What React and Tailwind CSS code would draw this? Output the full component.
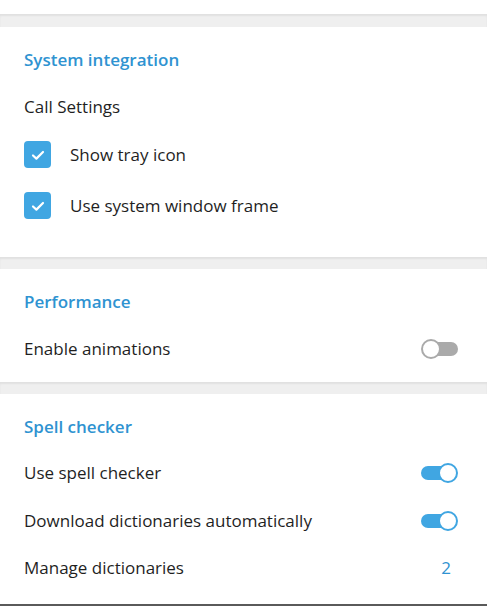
import React from "react";

function Band({ className = "" }) {
  return (
    <div
      className={`bg-[#efefef] shadow-[inset_0_2px_2px_rgba(0,0,0,0.06)] ${className}`}
    />
  );
}

function Checkbox() {
  return (
    <div className="w-[27px] h-[27px] rounded-[4px] bg-[#40a6e2] flex items-center justify-center shrink-0">
      <svg width="18" height="18" viewBox="0 0 18 18" fill="none">
        <path
          d="M4 9.5 L7.4 12.6 L14 6"
          stroke="white"
          strokeWidth="2.2"
          strokeLinecap="round"
          strokeLinejoin="round"
        />
      </svg>
    </div>
  );
}

function Toggle({ on }) {
  return (
    <div className="relative w-[37px] h-5 shrink-0">
      <div
        className={`absolute top-[3px] bottom-[3px] rounded-full ${
          on ? "left-0 right-2 bg-[#40a6e2]" : "left-2 right-0 bg-[#aaaaaa]"
        }`}
      />
      <div
        className={`absolute top-0 w-5 h-5 rounded-full bg-white border-2 ${
          on ? "right-0 border-[#40a6e2]" : "left-0 border-[#aaaaaa]"
        }`}
      />
    </div>
  );
}

function Title({ children }) {
  return (
    <div className="pt-[21px] h-[45px] leading-6 text-[17px] font-semibold text-[#2f93d1]">
      {children}
    </div>
  );
}

function Row({ label, className = "", children }) {
  return (
    <div className={`h-6 flex items-center justify-between ${className}`}>
      <span>{label}</span>
      {children}
    </div>
  );
}

export default function App() {
  return (
    <div className="w-[487px] h-[606px] bg-[#efefef] flex flex-col overflow-hidden font-['Open_Sans',sans-serif] text-[17px] text-[#1f1f1f]">
      <div className="h-[14px] bg-white shrink-0" />
      <Band className="h-[13px] shrink-0" />

      <section className="h-[230px] bg-white pl-6 pr-[29px] shrink-0">
        <Title>System integration</Title>
        <div className="mt-[23px] h-6 leading-6">Call Settings</div>
        <div className="mt-[22px] h-[27px] flex items-center gap-[19px]">
          <Checkbox />
          <span>Show tray icon</span>
        </div>
        <div className="mt-[24px] h-[27px] flex items-center gap-[19px]">
          <Checkbox />
          <span>Use system window frame</span>
        </div>
      </section>

      <Band className="h-3 shrink-0" />

      <section className="h-[113px] bg-white pl-6 pr-[29px] shrink-0">
        <Title>Performance</Title>
        <Row label="Enable animations" className="mt-[23px]">
          <Toggle on={false} />
        </Row>
      </section>

      <Band className="h-3 shrink-0" />

      <section className="flex-1 bg-white pl-6 pr-[29px]">
        <Title>Spell checker</Title>
        <Row label="Use spell checker" className="mt-[22px]">
          <Toggle on />
        </Row>
        <Row label="Download dictionaries automatically" className="mt-[24px]">
          <Toggle on />
        </Row>
        <Row label="Manage dictionaries" className="mt-[23px]">
          <span className="text-[#2f93d1] mr-[7px]">2</span>
        </Row>
      </section>

      <div className="h-[2px] bg-[#5a5a5a] shrink-0" />
    </div>
  );
}
